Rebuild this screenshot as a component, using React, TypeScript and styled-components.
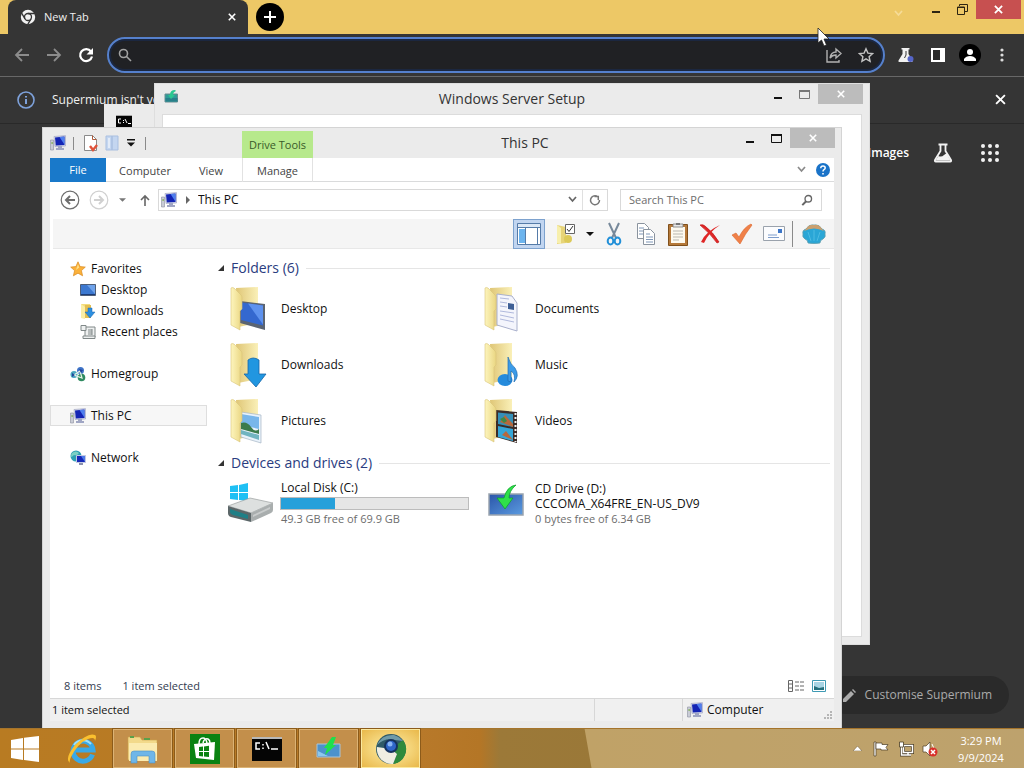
import React from "react";
import styled, { createGlobalStyle } from "styled-components";

const GlobalStyle = createGlobalStyle`
  * { box-sizing: border-box; }
  body {
    margin: 0;
    background: #353535;
    font-family: "Open Sans", "Noto Sans", sans-serif;
    font-size: 12px;
    line-height: 16px;
    color: #111;
  }
  button, input { font: inherit; color: inherit; padding: 0; border: 0; background: none; }
  input:focus { outline: none; }
  svg { display: block; flex: none; }
`;

const Screen = styled.div`
  height: 100vh;
  display: flex;
  flex-direction: column;
  overflow: hidden;
`;

const Desktop = styled.main`
  position: relative;
  flex: 1;
  min-height: 0;
`;

/* ---------- browser ---------- */

const Browser = styled.section`
  height: 100%;
  display: flex;
  flex-direction: column;
  background: #353535;
  color: #f0f0f0;
`;

const TabStrip = styled.header`
  height: 34px;
  display: flex;
  align-items: flex-start;
  padding-left: 8px;
  background: #edc866;
`;

const BrowserTab = styled.div`
  width: 240px;
  height: 34px;
  display: flex;
  align-items: center;
  gap: 8px;
  padding: 0 6px 0 12px;
  background: #353535;
  border-radius: 8px 8px 0 0;
  font-size: 11px;

  span { flex: 1; }
`;

const IconButton = styled.button<{ $w?: number; $h?: number }>`
  width: ${(p) => p.$w ?? 20}px;
  height: ${(p) => p.$h ?? 20}px;
  flex: none;
  display: flex;
  align-items: center;
  justify-content: center;
`;

const NewTabButton = styled(IconButton)`
  margin: 3px auto 0 8px;
  border-radius: 50%;
  background: #000;
`;

const CloseBox = styled(IconButton)<{ $red?: boolean }>`
  background: ${(p) => (p.$red ? "#c75050" : "#bcbcbc")};
  margin-right: ${(p) => (p.$red ? 3 : 6)}px;
`;

const Toolbar = styled.div`
  height: 43px;
  display: flex;
  align-items: center;
  padding: 0 6px;
  border-bottom: 1px solid #686868;
`;

const Omnibox = styled.div`
  flex: 1;
  height: 36px;
  display: flex;
  align-items: center;
  margin: 0 5px;
  padding: 0 1px 0 2px;
  border: 2px solid #5580cc;
  border-radius: 18px;
  background: #202124;
  box-shadow: inset 0 0 0 2px #1b2740;

  input { flex: 1; min-width: 0; }
`;

const InfoBar = styled.div`
  height: 47px;
  display: flex;
  align-items: center;
  gap: 17px;
  padding: 0 14px 1px 17px;
  border-bottom: 1px solid #292929;
  font-size: 12px;

  span { flex: 1; }
`;

const PageNav = styled.nav`
  display: flex;
  align-items: center;
  justify-content: flex-end;
  gap: 28px;
  padding: 19px 25px 0 0;
  font-size: 12px;
  font-weight: 600;

  a { color: #fff; text-decoration: none; margin-right: -4px; }
`;

const CustomiseRow = styled.div`
  margin-top: auto;
  display: flex;
  justify-content: flex-end;
  padding: 0 15px 14px 0;
`;

const CustomiseButton = styled.button`
  height: 38px;
  display: flex;
  align-items: center;
  gap: 9px;
  padding: 0 17px;
  border-radius: 19px;
  background: #2a2a2a;
  color: #aaa;
  font-size: 12px;
`;

const Avatar = styled(IconButton)`
  margin: 0 5px;
  border-radius: 50%;
  background: #000;
`;

/* ---------- desktop windows ---------- */

const Pointer = styled.svg`
  position: absolute;
  left: 817px;
  top: 27px;
`;

const SetupWindow = styled.section`
  position: absolute;
  inset: 83px 154px 83px 154px;
  display: flex;
  flex-direction: column;
  padding: 0 7px 7px;
  border: 1px solid #dedede;
  background: #ebebeb;
`;

const SetupTitle = styled.header`
  height: 30px;
  display: grid;
  grid-template-columns: 1fr auto 1fr;
  margin: 0 -7px;
  font-size: 14px;
  line-height: 30px;

  h1 { margin: 0; font: inherit; color: #333; }
`;

const SetupIcon = styled.div`
  padding: 5px 0 0 9px;
`;

const SetupBody = styled.div`
  flex: 1;
  border: 1px solid #dcdcdc;
  background: #fff;
`;

const ConsoleWindow = styled.section`
  position: absolute;
  left: 104px;
  top: 104px;
  width: 50px;
  height: 24px;
  padding: 11px 0 0 12px;
  background: #ebebeb;
`;

const Buttons = styled.div`
  display: flex;
  justify-content: flex-end;
  align-items: flex-start;
`;

const Explorer = styled.section`
  position: absolute;
  inset: 127px 182px 0 42px;
  display: flex;
  flex-direction: column;
  padding: 0 7px 7px;
  border: 1px solid #d4d4d4;
  border-bottom: 0;
  background: #ebebeb;
`;

const TitleBar = styled.header`
  height: 30px;
  display: flex;
  margin-right: -7px;

  h1 {
    flex: 1;
    margin: 0;
    font-size: 14px;
    font-weight: 400;
    line-height: 30px;
    text-align: center;
    color: #333;
  }
`;

const QuickAccess = styled.div`
  width: 192px;
  display: flex;
  align-items: center;
`;

const Divider = styled.i<{ $h: number; $m?: string }>`
  width: 1px;
  height: ${(p) => p.$h}px;
  margin: ${(p) => p.$m ?? "0"};
  background: #8a8a8a;
`;

const ToolsTab = styled.div`
  width: 71px;
  margin-top: 3px;
  background: #b7e98c;
  color: #3a5a2a;
  font-size: 11px;
  line-height: 28px;
  text-align: center;
`;

const Client = styled.div`
  flex: 1;
  min-height: 0;
  display: flex;
  flex-direction: column;
  background: #fff;
`;

const RibbonTabs = styled.div`
  height: 24px;
  display: flex;
  align-items: center;
  border-bottom: 1px solid #dadbdc;
  color: #444;
  font-size: 11px;
`;

const RibbonTab = styled.button<{ $w: number; $kind?: "file" | "tool" }>`
  width: ${(p) => p.$w}px;
  height: 24px;
  flex: none;
  padding-top: 2px;
  ${(p) => p.$kind === "file" && "background: #1979ca; color: #fff; padding-top: 0;"}
  ${(p) => p.$kind === "tool" && "margin: 0 auto 0 4px; border: solid #e2e2e2; border-width: 0 1px;"}
`;

const AddressRow = styled.div`
  height: 37px;
  display: flex;
  align-items: center;
  padding: 0 12px 2px 5px;
`;

const FieldBox = styled.div<{ $search?: boolean }>`
  height: 22px;
  display: flex;
  align-items: center;
  border: 1px solid #d9d9d9;
  min-width: 0;
  ${(p) =>
    p.$search
      ? "width: 202px; margin-left: 12px; padding-left: 8px; font-size: 11px;"
      : "flex: 1; padding-left: 2px;"}

  input { flex: 1; min-width: 0; }
  input::placeholder { color: #6d6d6d; opacity: 1; }
`;

const RefreshButton = styled(IconButton)`
  border-left: 1px solid #e0e0e0;
`;

const CommandBar = styled.div`
  height: 30px;
  display: flex;
  align-items: center;
  justify-content: flex-end;
  margin-left: 3px;
  padding-right: 4px;
  background: #f5f5f5;
  border-bottom: 1px solid #e8e8e8;
`;

const PaneButton = styled(IconButton)`
  margin-right: 5px;
  border: 1px solid #7da2ce;
  background: #c1d5f0;
`;

const Body = styled.div`
  flex: 1;
  min-height: 0;
  display: flex;
  padding-top: 9px;
`;

const NavPane = styled.nav`
  width: 157px;
  display: flex;
  flex-direction: column;
  gap: 21px;

  ul { margin: 0; padding: 0; list-style: none; }
`;

const NavLink = styled.a<{ $depth?: number; $active?: boolean }>`
  height: 21px;
  display: flex;
  align-items: center;
  gap: 5px;
  padding-left: ${(p) => (p.$depth ? 29 : 19)}px;
  border: 1px solid ${(p) => (p.$active ? "#dedede" : "transparent")};
  background: ${(p) => (p.$active ? "#f7f7f7" : "none")};
  color: #111;
  text-decoration: none;
`;

const Files = styled.div`
  flex: 1;
  min-width: 0;
  padding: 0 4px 0 11px;
`;

const GroupHeader = styled.h2`
  display: flex;
  align-items: center;
  gap: 7px;
  margin: 0;
  font-size: 14px;
  line-height: 20px;
  font-weight: 400;
  color: #2a3c80;

  &::after {
    content: "";
    flex: 1;
    height: 1px;
    background: #e5e5e5;
  }
`;

const ItemGrid = styled.div<{ $row: number; $pad: string }>`
  display: grid;
  grid-template-columns: 254px 254px;
  grid-auto-rows: ${(p) => p.$row}px;
  padding: ${(p) => p.$pad};
`;

const Item = styled.div`
  display: flex;
  align-items: center;
  gap: 7px;
  white-space: nowrap;
`;

const DriveInfo = styled.div`
  line-height: 15px;

  small { display: block; font-size: 11px; color: #6d6d6d; }
`;

const Capacity = styled.div`
  width: 189px;
  height: 13px;
  margin: 2px 0 1px -1px;
  border: 1px solid #bcbcbc;
  background: #e6e6e6;
`;

const CapacityFill = styled.div`
  height: 100%;
  background: #26a0da;
`;

const Details = styled.footer`
  height: 24px;
  display: flex;
  align-items: center;
  gap: 21px;
  padding: 0 5px 0 14px;
  color: #333c50;
  font-size: 11px;

  span:nth-of-type(2) { flex: 1; }
`;

const ViewButtons = styled.div`
  display: flex;
  gap: 3px;
`;

const StatusBar = styled.footer`
  height: 23px;
  display: grid;
  grid-template-columns: 1fr 88px 152px;
  border-top: 1px solid #d7d7d7;
  background: #f0f0f0;
`;

const StatusCell = styled.div<{ $first?: boolean }>`
  display: flex;
  align-items: center;
  gap: 4px;
  padding-left: ${(p) => (p.$first ? 2 : 4)}px;
  border-left: ${(p) => (p.$first ? 0 : 1)}px solid #d7d7d7;
  font-size: ${(p) => (p.$first ? 11 : 12)}px;

  span { flex: 1; }
`;

const Grip = styled.svg`
  align-self: flex-end;
`;

/* ---------- taskbar ---------- */

const Taskbar = styled.footer`
  height: 40px;
  flex: none;
  display: flex;
  align-items: center;
  border-top: 1px solid #a5742b;
  background:
    linear-gradient(80deg, transparent 582px, #c0a267 583px, #bda26d 100%),
    linear-gradient(90deg, #b87b22 0, #b8792a 420px, #b47626 480px, #9c7938 500px, #9a7838 600px);
`;

const Shortcut = styled(IconButton)`
  margin-right: 5px;
`;

const TaskButton = styled.button<{ $active?: boolean }>`
  width: 59px;
  height: 39px;
  flex: none;
  margin-right: 3px;
  display: flex;
  align-items: center;
  justify-content: center;
  border: 1px solid ${(p) => (p.$active ? "#fbe9a0" : "#dcb375")};
  outline: 1px solid #8c5b1a;
  background: ${(p) => (p.$active ? "radial-gradient(#fff0a8, #e9b84a)" : "#c38f4b")};
`;

const Tray = styled.div`
  display: flex;
  align-items: center;
  margin-left: auto;
`;

const Clock = styled.time`
  width: 82px;
  padding-right: 4px;
  font-size: 11px;
  line-height: 17px;
  text-align: center;
  color: #fff;
`;

/* ---------- drawings ---------- */

const Cross = ({ size = 9, color = "#fff", weight = 2 }: { size?: number; color?: string; weight?: number }) => (
  <svg width={size} height={size} viewBox="0 0 10 10" stroke={color} strokeWidth={weight}>
    <path d="M1 1l8 8M9 1l-8 8" />
  </svg>
);

const MinMark = ({ color = "#111" }) => (
  <svg width="8" height="2"><path d="M0 0h8v2H0z" fill={color} /></svg>
);

const MaxMark = ({ color = "#111" }) => (
  <svg width="11" height="9" fill="none" stroke={color}><path d="M.5 1v7.500h10V1" /><path d="M0 1h11" strokeWidth="2" /></svg>
);

const Caret = ({ color = "#111", w = 7 }) => (
  <svg width={w} height="4" viewBox="0 0 8 4"><path d="M0 0h8L4 4z" fill={color} /></svg>
);

const Chevron = ({ color = "#777" }) => (
  <svg width="9" height="7" fill="none" stroke={color} strokeWidth="1.700"><path d="M1 1l3.500 4L8 1" /></svg>
);

const PcIcon = () => (
  <svg width="16" height="16" viewBox="0 0 16 16">
    <path d="M.5 5h3v10h-3z" fill="#c9ccd6" stroke="#8b8fa0" strokeWidth=".6" />
    <path d="M1.500 7h1.200v2H1.500z" fill="#7fae50" />
    <path d="M4 1.500l11.500-.9V11L5 11.500z" fill="#d5d9ea" stroke="#9aa0bd" strokeWidth=".6" />
    <path d="M5 2.400l9.500-.8v8.500l-8.700.4z" fill="#1424b4" />
    <path d="M9.500 2.100l5-.4v8.100z" fill="#4f7fee" />
    <path d="M8 11h4v2H8zM6 13h8v2H6z" fill="#a0a6c4" />
  </svg>
);

const ChromeMark = () => (
  <svg width="16" height="16" viewBox="0 0 16 16">
    <circle cx="8" cy="8" r="7.200" fill="#f2f2f2" />
    <g stroke="#353535" strokeWidth="1.300" fill="none">
      <circle cx="8" cy="8" r="3.500" />
      <path d="M8 4.500h7M11 9.800l-3.500 6M5 9.800L1.500 3.800" />
    </g>
  </svg>
);

const Arrow = ({ flip, color }: { flip?: boolean; color: string }) => (
  <svg width="16" height="16" viewBox="0 0 16 16" fill="none" stroke={color} strokeWidth="1.800">
    {flip ? <path d="M1 8h13M8 2l6 6-6 6" /> : <path d="M15 8H2M8 2L2 8l6 6" />}
  </svg>
);

const LabsIcon = () => (
  <svg width="16" height="16" viewBox="0 0 16 16">
    <path d="M3.500 1h8v1.500h-1V7l4 6.500q.5 1.500-1 1.500h-12q-1.500 0-1-1.500L4.500 7V2.500h-1z" fill="#f2f2f2" />
    <path d="M8 4v4l-1.500 3" stroke="#353535" fill="none" />
    <circle cx="12.500" cy="12" r="3" fill="#5565c8" />
  </svg>
);

const FlaskIcon = () => (
  <svg width="20" height="20" viewBox="0 0 20 20">
    <path d="M5.500 1.500h9M7.500 2v6L2 17q-.6 1.500.8 1.500h14.400q1.400 0 .8-1.500l-5.500-9V2" fill="none" stroke="#f2f2f2" strokeWidth="1.800" />
    <path d="M5.500 13q3 1.500 5.500-1t3-1l3.500 6.500h-15z" fill="#f2f2f2" />
  </svg>
);

const DriveBadge = ({ w, h }: { w: number; h: number }) => (
  <svg width={w} height={h} viewBox="0 0 36 34">
    <defs>
      <linearGradient id="badge" x1="0" y1="0" x2="1" y2="1">
        <stop offset="0" stopColor="#2a55a8" /><stop offset="1" stopColor="#5b9be0" />
      </linearGradient>
    </defs>
    <path d="M1 11h34v21H1z" fill="url(#badge)" stroke="#9aa4ae" strokeWidth="1.500" />
    <path d="M28 2q-9 1-12 13H9l8 11 8-11h-4q0-7 7-13z" fill="#2fe04a" stroke="#0c9e28" strokeWidth=".7" />
  </svg>
);

const BoltBadge = () => (
  <svg width="26" height="24" viewBox="0 0 26 24">
    <path d="M1 7h23v13H1z" fill="#4c92cc" stroke="#a9c4d8" />
    <path d="M2 14l10 5H2z" fill="#8cc8ee" />
    <path d="M16 0h4l-3 8h3L9 18l2-7H8z" fill="#1fe04c" />
  </svg>
);

const SetupGlyph = () => (
  <svg width="15" height="14" viewBox="0 0 15 14">
    <path d="M1 5h12.500v8H1z" fill="#2e9c98" stroke="#6b8c92" />
    <path d="M1.500 9h12v3.500h-12z" fill="#27808a" />
    <path d="M11 1Q6 1 6 6H4l3 4 4-4H9q0-3 3-4z" fill="#28c890" />
  </svg>
);

const ConsoleGlyph = ({ w, h }: { w: number; h: number }) => (
  <svg width={w} height={h} viewBox="0 0 30 24">
    <path d="M0 0h30v24H0z" fill="#050505" />
    <path d="M0 0h30v2H0z" fill="#b8b8b8" />
    <path d="M8 6H4v6h4M11 7v1.500M11 10.500V12M14 5l3 7M19 12h7" fill="none" stroke="#fff" strokeWidth="1.500" />
  </svg>
);

const ConsoleSmall = () => (
  <svg width="16" height="12" viewBox="0 0 16 12">
    <path d="M0 0h16v12H0z" fill="#050505" />
    <path d="M0 0h16v1H0z" fill="#a8a8a8" />
    <path d="M5 4H2.500v4H5M7.500 5v1M7.500 7v1M9 4l2 4M12 8.500h3" fill="none" stroke="#fff" />
  </svg>
);

type FolderKind = "desktop" | "documents" | "downloads" | "music" | "pictures" | "videos";

const Overlay = ({ kind }: { kind: FolderKind }) => {
  switch (kind) {
    case "desktop":
      return <><path d="M14 16l25 3v26l-25-7z" fill="#5b6472" /><path d="M15 17.500l22 3v20L15 35z" fill="#3468cf" /><path d="M22 18.500l15 2v19z" fill="#5e92ee" /></>;
    case "documents":
      return <><path d="M17 9l15 2 5 7v28l-20-6z" fill="#f4f5fc" stroke="#a9b0cc" /><path d="M20 13l9 1M20 17l7 1M20 21l7 1M20 26l14 2M20 30l14 3M20 34l14 3" stroke="#b0b9dc" /><path d="M28 18l6 1v6l-6-1z" fill="#3e5f96" /></>;
    case "downloads":
      return <path d="M22 19q5-4 11 0v14h7L30 46 18 33h4z" fill="#2196e0" stroke="#1766a8" strokeWidth=".8" />;
    case "music":
      return <><ellipse cx="25" cy="39" rx="7.500" ry="6" fill="#258bdc" /><path d="M28 40V16q2 7 7 11 5 8-1 14 2-8-3-11v11z" fill="#3b9be8" stroke="#1f6cb0" strokeWidth=".7" /></>;
    case "pictures":
      return <><path d="M15 15l20 3v28l-20-6z" fill="#e9f2fb" stroke="#a6b6c4" strokeWidth=".7" /><path d="M15 17l18 3v12l-18-4z" fill="#78b6ea" /><path d="M15 26q6-2 10 4t8 2v5l-18-5z" fill="#3b7b4b" /><path d="M15 33l18 5v5l-18-6z" fill="#70b4c0" /></>;
    case "videos":
      return <><path d="M16 13l21 2v31l-21-6z" fill="#3b2c28" /><path d="M18 15.500l15 1.500v13l-15-3z" fill="#3590b8" /><path d="M18 29l15 3v12l-15-4z" fill="#34a6d8" /><path d="M20 25l5-7 8 9v3zM22 38l4-4 7 9z" fill="#b8683c" /><path d="M20 22l4-2 3 4-3 2z" fill="#3f8a46" /><path d="M35.500 16v29" stroke="#f2f2f2" strokeWidth="2" strokeDasharray="2 2" /></>;
  }
};

const FolderIcon = ({ kind }: { kind: FolderKind }) => (
  <svg width="48" height="48" viewBox="0 0 48 48">
    <defs>
      <linearGradient id="flap" x1="0" x2="1">
        <stop offset="0" stopColor="#fdf5bd" /><stop offset="1" stopColor="#ead682" />
      </linearGradient>
      <linearGradient id="back" x1="0" x2="1">
        <stop offset="0" stopColor="#dfc676" /><stop offset="1" stopColor="#faf0b8" />
      </linearGradient>
    </defs>
    <path d="M10 3l22-1v36l-20 4z" fill="url(#back)" />
    <Overlay kind={kind} />
    <path d="M5 3q1-1 3 0l7 7q1 1 1 3v11l-2 2v19L5 40z" fill="url(#flap)" stroke="#d9c578" strokeWidth=".6" />
  </svg>
);

const DiskIcon = () => (
  <svg width="48" height="42" viewBox="0 0 48 42">
    <path d="M4 4l8-1v7H4zM13 3l9-2v9h-9zM4 11h8v7l-8-1zM13 11h9v8l-9-1z" fill="#1fc0f4" />
    <path d="M2 24l22-8 23 5-22 10z" fill="#dde0df" stroke="#8e9494" strokeWidth=".6" />
    <path d="M2 24l23 7v9L5 35q-3-1-3-4z" fill="#5b6668" />
    <path d="M4 27l18 6v4L7 33q-3-1-3-3z" fill="#1f7f86" />
    <path d="M25 31l22-10v7q0 2-2 3L25 40z" fill="#a9aeae" />
    <path d="M27 33l17-8v2l-17 8z" fill="#c9cccc" />
  </svg>
);

const Star = () => (
  <svg width="16" height="16" viewBox="0 0 16 16">
    <path d="M8 .8l2.100 4.800 5.200.5-3.900 3.500 1.200 5.200L8 12.200l-4.600 2.600 1.200-5.200L.7 6.100l5.200-.5z" fill="#fbb13a" stroke="#d98a1f" strokeWidth=".7" />
    <path d="M8 3l1.200 3.500L6 9z" fill="#ffe08a" />
  </svg>
);

const MiniDesktop = () => (
  <svg width="16" height="16" viewBox="0 0 16 16">
    <path d="M.5 2.500h15v11H.5z" fill="#3c78d0" stroke="#4e5e78" /><path d="M7 3h8v9z" fill="#6ea2ea" /><path d="M1 12h14v1H1z" fill="#1d3d78" />
  </svg>
);

const MiniDownloads = () => (
  <svg width="16" height="16" viewBox="0 0 16 16">
    <path d="M1 1h9v14l-9-1z" fill="#f3dc7e" /><path d="M5 2h6v13H5z" fill="#e3bf52" /><path d="M1 1l4 3v12l-4-1z" fill="#fbeea6" />
    <path d="M8 5h4v4h3l-5 6-5-6h3z" fill="#2c8fe0" stroke="#1c66ac" strokeWidth=".5" />
  </svg>
);

const MiniRecent = () => (
  <svg width="16" height="16" viewBox="0 0 16 16" fill="#eef0f0" stroke="#808888">
    <path d="M5 3h10v10H5z" /><path d="M1 1.500h5v5H1zM3 12h12v2.500H3z" /><path d="M8 6h4M8 8h4M8 10h4M12 5v6" fill="none" />
  </svg>
);

const HomegroupIcon = () => (
  <svg width="16" height="16" viewBox="0 0 16 16">
    <circle cx="10.500" cy="4.500" r="3.500" fill="#3f74c8" /><circle cx="4" cy="8.500" r="3.500" fill="#4aa6c0" /><circle cx="11.500" cy="11.500" r="3.800" fill="#2f8a60" />
    <path d="M4 9l6-4 2 7z" fill="none" stroke="#e6f4e6" strokeWidth="1.200" /><path d="M9 3l4 1-2 3zM2 7l3 2-3 2z" fill="#21459a" />
  </svg>
);

const NetworkIcon = () => (
  <svg width="16" height="16" viewBox="0 0 16 16">
    <circle cx="6" cy="6" r="5.500" fill="#2f9fb4" /><path d="M2 3q4-3 7 0-2 3-5 2-2 2-3 2 0-3 1-4z" fill="#7cd0c4" />
    <path d="M6.500 5.500h9v7h-9z" fill="#1628b8" stroke="#c2c8e2" /><path d="M11 6h4v6z" fill="#4c78e8" /><path d="M9 13h4v2H9z" fill="#8a90ae" />
  </svg>
);

const Qat = {
  doc: (
    <svg width="16" height="18" viewBox="0 0 16 18"><path d="M1.500 1.500h8l4 4v11h-12z" fill="#fff" stroke="#8a8a8a" /><path d="M9.500 1.500v4h4" fill="none" stroke="#b05a3a" /><path d="M7 12l3 4 4-5" fill="none" stroke="#e0533a" strokeWidth="2.400" /></svg>
  ),
  book: (
    <svg width="14" height="16" viewBox="0 0 14 16"><path d="M1 1h6v14H1zM7 1h6v14H7z" fill="#c4d6f0" stroke="#a9bfe0" /><path d="M3 3h2v10H3z" fill="#e2ebf8" /></svg>
  ),
  menu: (
    <svg width="8" height="8"><path d="M0 0h8v1.500H0zM0 3.500h8l-4 4z" fill="#111" /></svg>
  ),
};

const Cmd = {
  pane: (
    <svg width="24" height="22" viewBox="0 0 24 22"><path d="M.5.500h23v21H.5z" fill="#fff" stroke="#557ba8" /><path d="M1 1h22v3H1z" fill="#dce8f6" /><path d="M1 4.500h22" stroke="#557ba8" /><path d="M2 6h6v14H2z" fill="#6cb4ee" /><path d="M8.500 5v16M20.500 5v16" stroke="#557ba8" /></svg>
  ),
  select: (
    <svg width="22" height="22" viewBox="0 0 22 22"><path d="M2 2l9 2v16l-9 1z" fill="#e7d478" /><path d="M2 2l4 3v16l-4-1z" fill="#f7efac" /><circle cx="13" cy="16" r="4" fill="#dcc958" /><path d="M10.500 1.500h9v9h-9z" fill="#fff" stroke="#666" /><path d="M12 6l2 2.500L18 3" fill="none" stroke="#333" /></svg>
  ),
  cut: (
    <svg width="16" height="24" viewBox="0 0 16 24" fill="none"><path d="M3 1l7 15M13 1L6 16" stroke="#76889a" strokeWidth="2" /><ellipse cx="4.500" cy="19" rx="2.800" ry="3.500" stroke="#2390d8" strokeWidth="2" /><ellipse cx="11.500" cy="19" rx="2.800" ry="3.500" stroke="#2390d8" strokeWidth="2" /></svg>
  ),
  copy: (
    <svg width="20" height="22" viewBox="0 0 20 22" stroke="#8a939e" fill="#fff"><path d="M1.500.500h7l4 4v11h-11z" /><path d="M7.500 6.500h7l4 4v11h-11z" /><path d="M3 5h5M3 8h4M3 11h4M10 11h4M10 14h7M10 16.500h7M10 19h7" stroke="#7f97b8" /></svg>
  ),
  paste: (
    <svg width="22" height="24" viewBox="0 0 22 24"><path d="M1.500 2.500h19v21h-19z" fill="#b5793a" stroke="#80501c" /><path d="M4 5h14v16H4z" fill="#fdfaf0" /><path d="M6 2h10v3H6z" fill="#e8e8e8" stroke="#777" strokeWidth=".8" /><path d="M9 1h4v2H9z" fill="#777" /><path d="M6 9h10M6 12h10M6 15h10M6 18h6" stroke="#b9b7b0" /></svg>
  ),
  remove: (
    <svg width="22" height="20" viewBox="0 0 22 20" fill="#df2626"><path d="M1 1q3-1 5 1 8 6 14 16l-2 1Q11 9 1 1z" stroke="#c41a1a" strokeWidth=".7" /><path d="M21 1Q10 8 5 19l-3-1Q7 7 21 1z" /></svg>
  ),
  check: (
    <svg width="22" height="22" viewBox="0 0 22 22"><path d="M1 12l4-2 3 4Q13 4 20 1l1 1Q14 11 9 21z" fill="#f08048" stroke="#d8672e" strokeWidth=".6" /></svg>
  ),
  mail: (
    <svg width="22" height="16" viewBox="0 0 22 16"><path d="M.5.500h21v14H.5z" fill="#fbfcfe" stroke="#9aa2ac" /><path d="M15 3h4v4h-4z" fill="#3c76c8" /><path d="M5 9h9M5 11.500h11" stroke="#7d9ccb" /></svg>
  ),
  shell: (
    <svg width="24" height="20" viewBox="0 0 24 20"><path d="M6 19q0-3-3-4Q0 13 1 10 0 6 4 5q3-5 8-4 5-1 8 4 4 1 3 5 1 3-2 5-3 1-3 4-6 1-12 0z" fill="#2aa6d6" stroke="#5a9cac" strokeWidth=".8" /><path d="M4 5q3-5 8-4 5-1 8 4l2 2q-10-5-20 0z" fill="#c9a070" /><path d="M9 17L6 8M12 17V6M15 17l3-9" stroke="#4cbbe2" fill="none" /></svg>
  ),
};

const NavArrow = ({ flip, color }: { flip?: boolean; color: string }) => (
  <svg width="20" height="20" viewBox="0 0 20 20" fill="none" stroke={color}>
    <circle cx="10" cy="10" r="8.800" strokeWidth="1.200" />
    <path d={flip ? "M5 10h9M10 6l4 4-4 4" : "M15 10H6M10 6l-4 4 4 4"} strokeWidth="2" />
  </svg>
);

const Magnifier = ({ color, flip }: { color: string; flip?: boolean }) => (
  <svg width={flip ? 12 : 14} height={flip ? 12 : 14} viewBox="0 0 14 14" fill="none" stroke={color} strokeWidth="1.600">
    {flip ? <><circle cx="8.500" cy="5.500" r="3.800" /><path d="M6 8.500L1.500 13" strokeWidth="2.400" /></> : <><circle cx="5.500" cy="5.500" r="4" /><path d="M8.500 8.500L13 13" /></>}
  </svg>
);

const GroupMark = () => (
  <svg width="6" height="6"><path d="M6 0v6H0z" fill="#333" /></svg>
);

/* ---------- content ---------- */

const folders: { name: string; kind: FolderKind }[] = [
  { name: "Desktop", kind: "desktop" },
  { name: "Documents", kind: "documents" },
  { name: "Downloads", kind: "downloads" },
  { name: "Music", kind: "music" },
  { name: "Pictures", kind: "pictures" },
  { name: "Videos", kind: "videos" },
];

const dots = [2, 9, 16];

const usedShare = 29;

const WindowButtons = ({ maxColor }: { maxColor?: string }) => (
  <Buttons>
    <IconButton $w={26} $h={27} aria-label="Minimize"><MinMark /></IconButton>
    <IconButton $w={27} $h={21} aria-label="Maximize"><MaxMark color={maxColor} /></IconButton>
    <CloseBox $w={45} $h={20} aria-label="Close"><Cross size={8} /></CloseBox>
  </Buttons>
);

const BrowserWindow = () => (
  <Browser>
    <TabStrip>
      <BrowserTab>
        <ChromeMark />
        <span>New Tab</span>
        <IconButton aria-label="Close tab"><Cross size={8} /></IconButton>
      </BrowserTab>
      <NewTabButton $w={28} $h={28} aria-label="New tab">
        <svg width="12" height="12" stroke="#fff" strokeWidth="2"><path d="M6 0v12M0 6h12" /></svg>
      </NewTabButton>
      <IconButton $w={50} $h={26} aria-label="Search tabs"><Chevron color="#f6dc98" /></IconButton>
      <IconButton $w={26} $h={24} aria-label="Minimize"><MinMark color="#2c2412" /></IconButton>
      <IconButton $w={27} $h={19} aria-label="Restore">
        <svg width="11" height="11" fill="none" stroke="#2c2412"><path d="M.5 3h7v7.500h-7z" /><path d="M0 3.500h8" strokeWidth="1" /><path d="M2.500 2V.5h8v7H8" /></svg>
      </IconButton>
      <CloseBox $red $w={45} $h={19} aria-label="Close"><Cross size={9} /></CloseBox>
    </TabStrip>
    <Toolbar>
      <IconButton $w={32} aria-label="Back"><Arrow color="#8c8c8c" /></IconButton>
      <IconButton $w={32} aria-label="Forward"><Arrow flip color="#8c8c8c" /></IconButton>
      <IconButton $w={32} aria-label="Reload">
        <svg width="16" height="16" viewBox="0 0 16 16"><path d="M13 4.500A6 6 0 1 0 14 9.500" fill="none" stroke="#fff" strokeWidth="2.200" /><path d="M15 1v6.500H8.500z" fill="#fff" /></svg>
      </IconButton>
      <Omnibox>
        <IconButton $w={28} aria-label="Search"><Magnifier color="#a2a2a2" /></IconButton>
        <input aria-label="Address and search" />
        <IconButton $w={32} aria-label="Share">
          <svg width="16" height="16" viewBox="0 0 16 16" fill="none" stroke="#b2b2b2" strokeWidth="1.400"><path d="M1 3v12h12v-2" /><path d="M4 11q1-6 6-6V2l5 4.500-5 4.500V8q-4 0-6 3z" /></svg>
        </IconButton>
        <IconButton $w={32} aria-label="Bookmark">
          <svg width="16" height="16" viewBox="0 0 16 16" fill="none" stroke="#c2c2c2" strokeWidth="1.400"><path d="M8 1.800l1.900 4.300 4.700.5-3.500 3.100 1 4.600L8 11.900l-4.100 2.400 1-4.600-3.500-3.100 4.700-.5z" /></svg>
        </IconButton>
      </Omnibox>
      <IconButton $w={32} aria-label="Experiments"><LabsIcon /></IconButton>
      <IconButton $w={32} aria-label="Side panel">
        <svg width="14" height="14"><path d="M1 1h12v12H1z" fill="#2b2b2b" stroke="#fff" strokeWidth="2" /><path d="M9 1h4v12H9z" fill="#fff" /></svg>
      </IconButton>
      <Avatar $w={22} $h={22} aria-label="Profile">
        <svg width="14" height="14" fill="#fff"><circle cx="7" cy="4" r="3" /><path d="M1 13V11q2-3 6-3t6 3v2z" /></svg>
      </Avatar>
      <IconButton $w={32} aria-label="Menu">
        <svg width="4" height="14" fill="#ddd"><circle cx="2" cy="2" r="1.600" /><circle cx="2" cy="7" r="1.600" /><circle cx="2" cy="12" r="1.600" /></svg>
      </IconButton>
    </Toolbar>
    <InfoBar>
      <svg width="18" height="18" fill="none" stroke="#7ea2dc" strokeWidth="1.600"><circle cx="9" cy="9" r="8" /><path d="M9 8v5M9 5v1.600" strokeWidth="2" /></svg>
      <span>Supermium isn't your default browser</span>
      <IconButton aria-label="Dismiss"><Cross size={11} weight={1.700} /></IconButton>
    </InfoBar>
    <PageNav>
      <a href="#images">Images</a>
      <FlaskIcon />
      <svg width="18" height="18" fill="#f2f2f2">
        {dots.map((y) => dots.map((x) => <circle key={`${x}-${y}`} cx={x} cy={y} r="2" />))}
      </svg>
    </PageNav>
    <CustomiseRow>
      <CustomiseButton>
        <svg width="13" height="13" fill="#ababab"><path d="M0 13v-3l8-8 3 3-8 8zM9 1l1-1 3 3-1 1z" /></svg>
        Customise Supermium
      </CustomiseButton>
    </CustomiseRow>
  </Browser>
);

const ExplorerWindow = () => (
  <Explorer>
    <TitleBar>
      <QuickAccess>
        <PcIcon />
        <Divider $h={13} $m="0 8px 0 7px" />
        <IconButton $w={18} aria-label="Properties">{Qat.doc}</IconButton>
        <IconButton $w={24} aria-label="New folder">{Qat.book}</IconButton>
        <IconButton $w={14} aria-label="Customize toolbar">{Qat.menu}</IconButton>
        <Divider $h={13} $m="0 0 0 7px" />
      </QuickAccess>
      <ToolsTab>Drive Tools</ToolsTab>
      <h1>This PC</h1>
      <WindowButtons />
    </TitleBar>
    <Client>
      <RibbonTabs>
        <RibbonTab $w={56} $kind="file">File</RibbonTab>
        <RibbonTab $w={78}>Computer</RibbonTab>
        <RibbonTab $w={54}>View</RibbonTab>
        <RibbonTab $w={71} $kind="tool">Manage</RibbonTab>
        <IconButton $w={22} aria-label="Expand ribbon"><Chevron color="#8a8a8a" /></IconButton>
        <IconButton $w={22} aria-label="Help">
          <svg width="14" height="14" viewBox="0 0 14 14"><circle cx="7" cy="7" r="7" fill="#1a73c8" /><path d="M4.800 5.200q0-2.200 2.200-2.200t2.200 2q0 1-1.200 1.700-1 .6-1 1.800M7 10v1.600" fill="none" stroke="#fff" strokeWidth="1.500" /></svg>
        </IconButton>
      </RibbonTabs>
      <AddressRow>
        <IconButton $w={29} aria-label="Back"><NavArrow color="#6e6e6e" /></IconButton>
        <IconButton $w={29} aria-label="Forward"><NavArrow flip color="#d0d0d0" /></IconButton>
        <IconButton $w={18} aria-label="Recent locations"><Caret color="#777" /></IconButton>
        <IconButton $w={27} aria-label="Up">
          <svg width="10" height="12" fill="none" stroke="#666" strokeWidth="1.600"><path d="M5 12V2M1 6l4-4 4 4" /></svg>
        </IconButton>
        <FieldBox>
          <PcIcon />
          <IconButton $w={21} aria-label="Expand"><svg width="4" height="8"><path d="M0 0l4 4-4 4z" fill="#666" /></svg></IconButton>
          <input aria-label="Location" defaultValue="This PC" />
          <IconButton aria-label="Previous locations"><Chevron color="#666" /></IconButton>
          <RefreshButton $w={25} aria-label="Refresh">
            <svg width="12" height="12" fill="none" stroke="#777" strokeWidth="1.500"><path d="M8 2.200A4.500 4.500 0 1 0 10.500 6" /><path d="M5.500 2.500h3.800V6" /></svg>
          </RefreshButton>
        </FieldBox>
        <FieldBox $search>
          <input aria-label="Search This PC" placeholder="Search This PC" />
          <IconButton $w={28} aria-label="Search"><Magnifier flip color="#666" /></IconButton>
        </FieldBox>
      </AddressRow>
      <CommandBar>
        <PaneButton $w={32} $h={30} aria-label="Navigation pane">{Cmd.pane}</PaneButton>
        <IconButton $w={32} aria-label="Select">{Cmd.select}</IconButton>
        <IconButton $w={16} aria-label="Select options"><Caret w={8} /></IconButton>
        <IconButton $w={32} aria-label="Cut">{Cmd.cut}</IconButton>
        <IconButton $w={32} aria-label="Copy">{Cmd.copy}</IconButton>
        <IconButton $w={32} aria-label="Paste">{Cmd.paste}</IconButton>
        <IconButton $w={32} aria-label="Delete">{Cmd.remove}</IconButton>
        <IconButton $w={32} aria-label="Rename">{Cmd.check}</IconButton>
        <IconButton $w={32} aria-label="Mail">{Cmd.mail}</IconButton>
        <Divider $h={26} $m="0 5px 0 2px" />
        <IconButton $w={32} aria-label="Shell">{Cmd.shell}</IconButton>
      </CommandBar>
      <Body>
        <NavPane>
          <ul>
            <li><NavLink href="#favorites"><Star />Favorites</NavLink></li>
            <li><NavLink href="#desktop" $depth={1}><MiniDesktop />Desktop</NavLink></li>
            <li><NavLink href="#downloads" $depth={1}><MiniDownloads />Downloads</NavLink></li>
            <li><NavLink href="#recent" $depth={1}><MiniRecent />Recent places</NavLink></li>
          </ul>
          <NavLink href="#homegroup"><HomegroupIcon />Homegroup</NavLink>
          <NavLink href="#pc" $active><PcIcon />This PC</NavLink>
          <NavLink href="#network"><NetworkIcon />Network</NavLink>
        </NavPane>
        <Files>
          <GroupHeader><GroupMark />Folders (6)</GroupHeader>
          <ItemGrid $row={56} $pad="3px 0 4px 8px">
            {folders.map((f) => (
              <Item key={f.name}><FolderIcon kind={f.kind} />{f.name}</Item>
            ))}
          </ItemGrid>
          <GroupHeader><GroupMark />Devices and drives (2)</GroupHeader>
          <ItemGrid $row={60} $pad="0 0 0 8px">
            <Item>
              <DiskIcon />
              <DriveInfo>
                Local Disk (C:)
                <Capacity><CapacityFill style={{ width: `${usedShare}%` }} /></Capacity>
                <small>49.3 GB free of 69.9 GB</small>
              </DriveInfo>
            </Item>
            <Item>
              <svg width="48" height="42" viewBox="0 0 48 42"><g transform="translate(8 1)"><DriveBadge w={36} h={34} /></g></svg>
              <DriveInfo>
                CD Drive (D:)<br />CCCOMA_X64FRE_EN-US_DV9
                <small>0 bytes free of 6.34 GB</small>
              </DriveInfo>
            </Item>
          </ItemGrid>
        </Files>
      </Body>
      <Details>
        <span>8 items</span>
        <span>1 item selected</span>
        <ViewButtons>
          <IconButton aria-label="Details view">
            <svg width="16" height="12" stroke="#666" fill="none"><path d="M.5.500h4v11h-4zM1 4h3M1 8h3" /><path d="M7 2h9M7 6h9M7 10h9" strokeDasharray="4 1" /></svg>
          </IconButton>
          <IconButton aria-label="Large icons view">
            <svg width="14" height="12"><path d="M.5.500h13v11H.5z" fill="#fff" stroke="#3f9ab4" /><path d="M2 2h10v8H2z" fill="#a8d4e4" /><path d="M2 6l5 2 5-1v3H2z" fill="#246f7c" /></svg>
          </IconButton>
        </ViewButtons>
      </Details>
      <StatusBar>
        <StatusCell $first>1 item selected</StatusCell>
        <StatusCell />
        <StatusCell>
          <PcIcon />
          <span>Computer</span>
          <Grip width="12" height="12" fill="#b5b5b5"><path d="M8 2h2v2H8zM8 5h2v2H8zM8 8h2v2H8zM5 5h2v2H5zM5 8h2v2H5zM2 8h2v2H2z" /></Grip>
        </StatusCell>
      </StatusBar>
    </Client>
  </Explorer>
);

const TaskbarArea = () => (
  <Taskbar>
    <Shortcut $w={50} $h={39} aria-label="Start">
      <svg width="28" height="26" viewBox="0 0 28 26" fill="#fff"><path d="M0 4l12-2v10.500H0zM13 1.800L28 0v12.500H13zM0 13.500h12V24L0 22zM13 13.500h15V26l-15-2z" /></svg>
    </Shortcut>
    <Shortcut $w={53} $h={39} aria-label="Internet Explorer">
      <svg width="32" height="32" viewBox="0 0 32 32" fill="none">
        <path d="M26.500 21.500A10 10 0 1 1 27 17H9" stroke="#3aa9e6" strokeWidth="5" />
        <path d="M25 11A10.500 10.500 0 0 0 8 12" stroke="#9fe0fa" strokeWidth="2" />
        <path d="M4 30Q-2 26 9 12 22-1 29 2q2 1 0 6 0-5-7-2Q12 10 5 24q-2 4-1 6z" fill="#fbc02e" />
      </svg>
    </Shortcut>
    <TaskButton aria-label="File Explorer">
      <svg width="32" height="30" viewBox="0 0 32 30"><path d="M1 3h12l2 3h15v20H1z" fill="#f2d98a" stroke="#c9a24c" strokeWidth=".6" /><path d="M3 2h4v2H3zM17 4h6v2h-6z" fill="#5aa04a" /><path d="M2 9h28v18H2z" fill="#fbebb0" /><path d="M4 29V20q0-3 3-3h18q3 0 3 3v9h-6v-7H10v7z" fill="#6fb6e8" stroke="#4c90c4" strokeWidth=".6" /></svg>
    </TaskButton>
    <TaskButton aria-label="Store">
      <svg width="30" height="30" viewBox="0 0 30 30"><path d="M0 0h30v30H0z" fill="#0a8212" /><path d="M4 10l21-2-1 18-18-2z" fill="#fff" /><path d="M9 10q0-6 4-6 3 0 4 5M13 9q1-5 5-4 2 1 2 4" fill="none" stroke="#fff" strokeWidth="1.500" /><path d="M9 13l4-.5V17H9zM14 12.400l5-.6V17h-5zM9 18h4v4.500L9 22zM14 18h5v5l-5-.5z" fill="#0a8212" /></svg>
    </TaskButton>
    <TaskButton aria-label="Command Prompt"><ConsoleGlyph w={30} h={24} /></TaskButton>
    <TaskButton aria-label="Windows Server Setup"><BoltBadge /></TaskButton>
    <TaskButton $active aria-label="Supermium">
      <svg width="32" height="32" viewBox="0 0 32 32"><circle cx="16" cy="16" r="15" fill="#2f5a68" /><path d="M16 16L28 7a15 15 0 0 1-10 24l4-10z" fill="#2f8a3c" /><path d="M16 16L2 14a15 15 0 0 0 16 17l4-10z" fill="#f0eee2" /><path d="M2 12Q7 1 19 2q6 2 9 6l-8-1Q10 4 2 12z" fill="#6f9aa8" /><circle cx="16" cy="13" r="7" fill="#16335e" /><circle cx="16" cy="13" r="5" fill="#2f66c8" /><circle cx="15" cy="11" r="2.500" fill="#8ab6f4" /></svg>
    </TaskButton>
    <Tray>
      <IconButton $w={24} aria-label="Show hidden icons"><svg width="9" height="5"><path d="M0 5h9L4.500 0z" fill="#fff" stroke="#6b5632" strokeWidth=".5" /></svg></IconButton>
      <IconButton $w={24} aria-label="Action Center">
        <svg width="16" height="16" viewBox="0 0 16 16" fill="#fff" stroke="#4a3d25" strokeWidth=".7"><path d="M1 1h2v14H1z" /><path d="M3 2h6v1.500h6L13 6.500l2 2.500H8V8H3z" /></svg>
      </IconButton>
      <IconButton $w={25} aria-label="Network">
        <svg width="16" height="16" viewBox="0 0 16 16" fill="none"><path d="M5.500 4.500h9v7h-9zM7 14h6M10 12v2M3.500 6v8h4" stroke="#4a3d25" strokeWidth="3" /><path d="M5.500 4.500h9v7h-9zM7 14h6M10 12v2M3.500 6v8h4" stroke="#fff" strokeWidth="1.500" /><path d="M1.500 1h4v5h-4z" fill="#fff" stroke="#4a3d25" strokeWidth=".8" /></svg>
      </IconButton>
      <IconButton $w={24} aria-label="Volume">
        <svg width="16" height="16" viewBox="0 0 16 16"><path d="M1 5h3l4-4v14l-4-4H1z" fill="#fff" stroke="#4a3d25" strokeWidth=".7" /><path d="M10 3q3 4 1 8" stroke="#fff" fill="none" /><circle cx="11" cy="11" r="4.500" fill="#d8302a" /><path d="M9 9l4 4M13 9l-4 4" stroke="#fff" strokeWidth="1.500" /></svg>
      </IconButton>
      <Clock>3:29 PM<br />9/9/2024</Clock>
    </Tray>
  </Taskbar>
);

export default function App() {
  return (
    <Screen>
      <GlobalStyle />
      <Desktop>
        <BrowserWindow />
        <ConsoleWindow><ConsoleSmall /></ConsoleWindow>
        <SetupWindow>
          <SetupTitle>
            <SetupIcon><SetupGlyph /></SetupIcon>
            <h1>Windows Server Setup</h1>
            <WindowButtons maxColor="#777" />
          </SetupTitle>
          <SetupBody />
        </SetupWindow>
        <ExplorerWindow />
        <Pointer width="13" height="20" viewBox="0 0 13 20"><path d="M1 1v15l3.500-3L7 19l2.500-1L7 12h5z" fill="#fff" stroke="#222" strokeWidth=".8" /></Pointer>
      </Desktop>
      <TaskbarArea />
    </Screen>
  );
}
